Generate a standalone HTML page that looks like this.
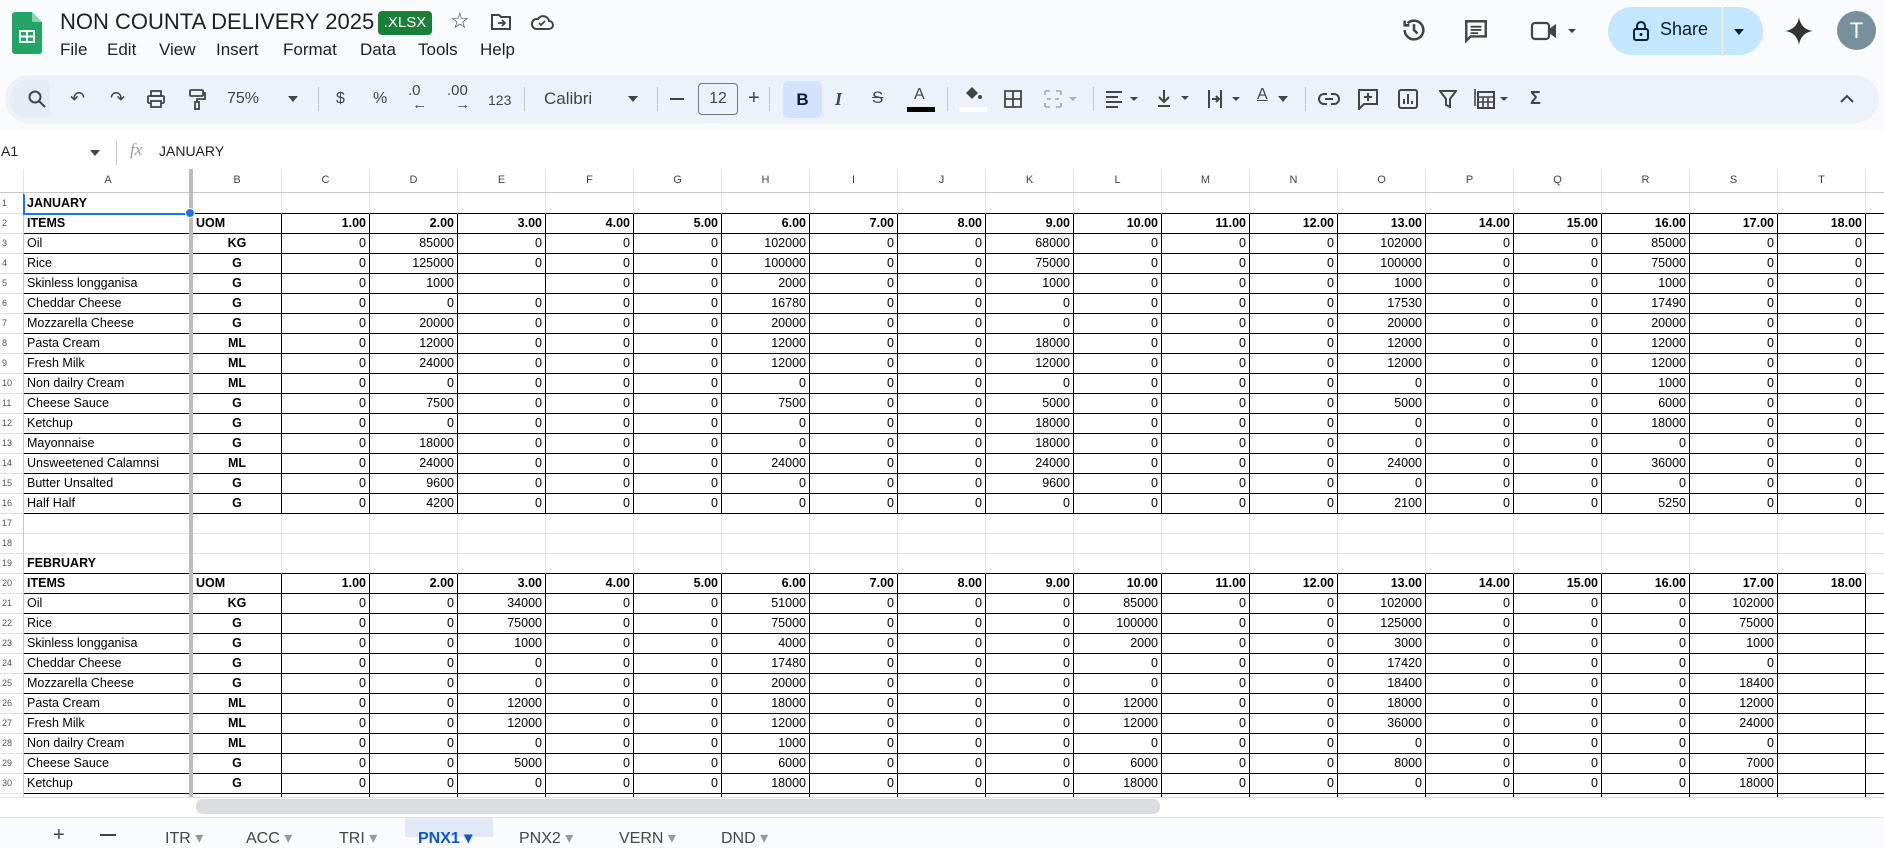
<!DOCTYPE html>
<html><head><meta charset="utf-8">
<style>
*{box-sizing:border-box;margin:0;padding:0}
body{width:1884px;height:837px;overflow:hidden;background:#f9fbfd;font-family:"Liberation Sans",Arial,sans-serif;position:relative;color:#1f1f1f}
.a{position:absolute}
.menu span{position:absolute;top:40px;font-size:17px;color:#1f1f1f}
.tb{position:absolute;top:75px;left:5px;width:1874px;height:48px;background:#edf2fa;border-radius:24px}
.div{position:absolute;top:87px;width:1px;height:24px;background:#c7c7c7}
#grid{position:absolute;left:0;top:169px;width:1884px;height:628px;overflow:hidden;background:#fff}
table{border-collapse:separate;border-spacing:0;table-layout:fixed;width:1900px}
td,th{box-sizing:border-box;height:20px;border-right:1px solid #e2e3e3;border-bottom:1px solid #e2e3e3;font-size:12.5px;white-space:nowrap;overflow:hidden;padding:0 3px;text-align:right;font-weight:normal;color:#000;line-height:19px}
tr.h th{height:24px;font-size:11px;color:#444;text-align:center;border-bottom:1px solid #c4c7c5;border-right:1px solid #e2e3e3}
tr.r1 td,tr.r1 th{height:21px}
th.r{font-size:9px;color:#555;text-align:left;padding-left:2px;border-right:1px solid #c4c7c5}
tr.d td{border-right:1px solid #000;border-bottom:1px solid #000}
tr.bb td.k{border-bottom:1px solid #000}
td.l{text-align:left}
td.c{text-align:center;font-weight:bold}
tr.hd td{font-weight:bold}
.tab{position:absolute;top:828px;font-size:16px;color:#444746}
</style></head><body>
<svg class="a" style="left:12px;top:12px" width="30" height="42" viewBox="0 0 30 42"><path d="M3 0h17l10 10v29a3 3 0 0 1-3 3H3a3 3 0 0 1-3-3V3a3 3 0 0 1 3-3z" fill="#23a566"/><path d="M20 0l10 10h-8a2 2 0 0 1-2-2z" fill="#8ed1b1"/><rect x="7" y="18" width="16" height="13" fill="#fff"/><rect x="9" y="20" width="5" height="3.5" fill="#23a566"/><rect x="16" y="20" width="5" height="3.5" fill="#23a566"/><rect x="9" y="25.5" width="5" height="3.5" fill="#23a566"/><rect x="16" y="25.5" width="5" height="3.5" fill="#23a566"/></svg>
<div class="a" style="left:60px;top:9px;font-size:22px;color:#1f1f1f">NON COUNTA DELIVERY 2025</div>
<div class="a" style="left:378px;top:11px;width:54px;height:24px;background:#188038;border-radius:4px;color:#fff;font-size:15px;line-height:24px;text-align:center">.XLSX</div>
<div class="a" style="left:450px;top:8px;font-size:22px;color:#444">☆</div>
<svg class="a" style="left:490px;top:12px" width="22" height="20" viewBox="0 0 22 20"><path d="M2 3h7l2 2h9v12H2z" fill="none" stroke="#444" stroke-width="2"/><path d="M8 11h7M12 8l3 3-3 3" fill="none" stroke="#444" stroke-width="1.8"/></svg>
<svg class="a" style="left:530px;top:12px" width="24" height="20" viewBox="0 0 24 20"><path d="M6 17h13a4 4 0 0 0 0-8 6 6 0 0 0-11-2 5 5 0 0 0-2 10z" fill="none" stroke="#444" stroke-width="2"/><path d="M9 11l2 2 4-4" fill="none" stroke="#444" stroke-width="1.8"/></svg>
<div class="menu"><span style="left:60px">File</span><span style="left:107px">Edit</span><span style="left:159px">View</span><span style="left:216px">Insert</span><span style="left:283px">Format</span><span style="left:360px">Data</span><span style="left:418px">Tools</span><span style="left:480px">Help</span></div>
<svg class="a" style="left:1400px;top:16px" width="28" height="28" viewBox="0 0 24 24"><path d="M4 12a8 8 0 1 0 2.5-5.8M4 4v4h4" fill="none" stroke="#444" stroke-width="2.2"/><path d="M12 7v5l3 3" fill="none" stroke="#444" stroke-width="2.2"/></svg>
<svg class="a" style="left:1463px;top:18px" width="26" height="26" viewBox="0 0 24 24"><path d="M3 3h18v14H7l-4 4z" fill="none" stroke="#444" stroke-width="2.2"/><path d="M7 8h10M7 11h10M7 14h7" stroke="#444" stroke-width="1.8"/></svg>
<svg class="a" style="left:1530px;top:19px" width="50" height="24" viewBox="0 0 50 24"><rect x="2" y="4" width="17" height="16" rx="3" fill="none" stroke="#444" stroke-width="2.2"/><path d="M19 10l7-5v14l-7-5z" fill="#444"/><path d="M38 10h8l-4 4z" fill="#444"/></svg>
<div class="a" style="left:1608px;top:7px;width:155px;height:48px;background:#c2e7ff;border-radius:24px"></div>
<div class="a" style="left:1722px;top:7px;width:1px;height:48px;background:#fff"></div>
<svg class="a" style="left:1632px;top:20px" width="18" height="22" viewBox="0 0 18 22"><rect x="2" y="9" width="14" height="11" rx="2" fill="none" stroke="#0b1d33" stroke-width="2"/><path d="M5 9V6a4 4 0 0 1 8 0v3" fill="none" stroke="#0b1d33" stroke-width="2"/><circle cx="9" cy="14.5" r="1.5" fill="#0b1d33"/></svg>
<div class="a" style="left:1660px;top:19px;font-size:18px;color:#0b1d33">Share</div>
<svg class="a" style="left:1733px;top:28px" width="12" height="8" viewBox="0 0 12 8"><path d="M1 1h10L6 7z" fill="#0b1d33"/></svg>
<svg class="a" style="left:1785px;top:17px" width="28" height="28" viewBox="0 0 28 28"><path d="M14 0C15 8 20 13 28 14 20 15 15 20 14 28 13 20 8 15 0 14 8 13 13 8 14 0z" fill="#333"/></svg>
<div class="a" style="left:1837px;top:11px;width:39px;height:39px;border-radius:50%;background:#78909c;color:#fff;font-size:22px;line-height:39px;text-align:center">T</div>
<div class="tb"></div>
<div class="a" style="left:10px;top:80px;width:40px;height:38px;background:#e6ecf6;border-radius:18px 4px 4px 18px"></div>
<svg class="a" style="left:28px;top:90px" width="18" height="18" viewBox="0 0 18 18"><circle cx="7" cy="7" r="5.5" fill="none" stroke="#444" stroke-width="2"/><path d="M11 11l6 6" stroke="#444" stroke-width="2"/></svg>
<div class="a" style="left:70px;top:88px;font-size:18px;color:#444">↶</div>
<div class="a" style="left:110px;top:88px;font-size:18px;color:#444">↷</div>
<svg class="a" style="left:146px;top:89px" width="20" height="20" viewBox="0 0 20 20"><rect x="5" y="2" width="10" height="5" fill="none" stroke="#444" stroke-width="1.8"/><rect x="2" y="7" width="16" height="7" rx="1" fill="none" stroke="#444" stroke-width="1.8"/><rect x="5" y="12" width="10" height="6" fill="#edf2fa" stroke="#444" stroke-width="1.8"/></svg>
<svg class="a" style="left:188px;top:88px" width="18" height="22" viewBox="0 0 18 22"><rect x="2" y="2" width="13" height="6" rx="1" fill="none" stroke="#444" stroke-width="1.8"/><path d="M15 5h2v6H9v3" fill="none" stroke="#444" stroke-width="1.8"/><rect x="7" y="14" width="4" height="7" fill="none" stroke="#444" stroke-width="1.8"/></svg>
<div class="a" style="left:227px;top:90px;font-size:16px;color:#444">75%</div>
<svg class="a" style="left:288px;top:96px" width="10" height="6"><path d="M0 0h10L5 6z" fill="#444"/></svg>
<div class="div" style="left:318px"></div>
<div class="a" style="left:336px;top:90px;font-size:16px;color:#444">$</div>
<div class="a" style="left:373px;top:90px;font-size:16px;color:#444">%</div>
<div class="a" style="left:408px;top:84px;font-size:15px;color:#444;line-height:14px">.0<br>&nbsp;←</div>
<div class="a" style="left:447px;top:84px;font-size:15px;color:#444;line-height:14px">.00<br>&nbsp;&nbsp;→</div>
<div class="a" style="left:488px;top:92px;font-size:14px;color:#444">123</div>
<div class="div" style="left:524px"></div>
<div class="a" style="left:544px;top:89px;font-size:17px;color:#444">Calibri</div>
<svg class="a" style="left:628px;top:96px" width="10" height="6"><path d="M0 0h10L5 6z" fill="#444"/></svg>
<div class="div" style="left:657px"></div>
<div class="a" style="left:670px;top:98px;width:14px;height:2px;background:#444"></div>
<div class="a" style="left:698px;top:83px;width:40px;height:32px;border:1px solid #747775;border-radius:4px;font-size:16px;line-height:30px;text-align:center;color:#444">12</div>
<div class="a" style="left:748px;top:87px;font-size:20px;color:#444">+</div>
<div class="div" style="left:769px"></div>
<div class="a" style="left:783px;top:81px;width:39px;height:37px;background:#d3e3fd;border-radius:5px;font-weight:bold;color:#0b1d33;font-size:17px;text-align:center;line-height:37px">B</div>
<div class="a" style="left:835px;top:89px;font-size:18px;color:#444;font-style:italic;font-family:'Liberation Serif',serif;font-weight:bold">I</div>
<div class="a" style="left:872px;top:88px;font-size:17px;color:#444;text-decoration:line-through">S</div>
<div class="a" style="left:914px;top:86px;font-size:16px;color:#444">A</div>
<div class="a" style="left:907px;top:107px;width:28px;height:5px;background:#000"></div>
<div class="div" style="left:947px"></div>
<svg class="a" style="left:962px;top:85px" width="22" height="18" viewBox="0 0 22 18"><path d="M4 8l6-6 6 6-6 6z" fill="#444"/><circle cx="18" cy="12" r="2" fill="#444"/></svg>
<div class="a" style="left:959px;top:107px;width:28px;height:5px;background:#fff"></div>
<svg class="a" style="left:1004px;top:90px" width="18" height="18" viewBox="0 0 18 18"><path d="M1 1h16v16H1zM9 1v16M1 9h16" fill="none" stroke="#444" stroke-width="1.8"/></svg>
<svg class="a" style="left:1044px;top:90px" width="36" height="18" viewBox="0 0 36 18"><path d="M1 1h5M1 17h5M12 1h5M12 17h5M1 1v4M1 13v4M17 1v4M17 13v4M3 9h4M11 9h4" stroke="#b0b0b0" stroke-width="1.8" fill="none"/><path d="M25 7h8l-4 4z" fill="#b0b0b0"/></svg>
<div class="div" style="left:1093px"></div>
<svg class="a" style="left:1105px;top:90px" width="36" height="18" viewBox="0 0 36 18"><path d="M1 2h16M1 7h12M1 12h16M1 17h12" stroke="#444" stroke-width="2"/><path d="M25 7h8l-4 4z" fill="#444"/></svg>
<svg class="a" style="left:1156px;top:88px" width="36" height="20" viewBox="0 0 36 20"><path d="M8 2v12M3 9l5 5 5-5M2 18h12" stroke="#444" stroke-width="2" fill="none"/><path d="M25 8h8l-4 4z" fill="#444"/></svg>
<svg class="a" style="left:1207px;top:89px" width="36" height="20" viewBox="0 0 36 20"><path d="M2 1v18M14 1v18M5 10h7M9 7l3 3-3 3" stroke="#444" stroke-width="2" fill="none"/><path d="M25 8h8l-4 4z" fill="#444"/></svg>
<div class="a" style="left:1257px;top:86px;font-size:16px;color:#444;text-decoration:underline">A</div>
<svg class="a" style="left:1278px;top:96px" width="10" height="6"><path d="M0 0h10L5 6z" fill="#444"/></svg>
<div class="div" style="left:1305px"></div>
<svg class="a" style="left:1318px;top:92px" width="22" height="14" viewBox="0 0 22 14"><path d="M9 2H6a5 5 0 0 0 0 10h3M13 2h3a5 5 0 0 1 0 10h-3M7 7h8" fill="none" stroke="#444" stroke-width="2"/></svg>
<svg class="a" style="left:1357px;top:88px" width="22" height="22" viewBox="0 0 22 22"><path d="M2 2h18v14H7l-5 5z" fill="none" stroke="#444" stroke-width="2"/><path d="M11 5v8M7 9h8" stroke="#444" stroke-width="2"/></svg>
<svg class="a" style="left:1398px;top:89px" width="20" height="20" viewBox="0 0 20 20"><rect x="1" y="1" width="18" height="18" rx="2" fill="none" stroke="#444" stroke-width="2"/><path d="M6 15V10M10 15V5M14 15v-3" stroke="#444" stroke-width="2"/></svg>
<svg class="a" style="left:1439px;top:90px" width="18" height="18" viewBox="0 0 18 18"><path d="M1 1h16l-6 8v8l-4-2V9z" fill="none" stroke="#444" stroke-width="2"/></svg>
<svg class="a" style="left:1474px;top:88px" width="38" height="22" viewBox="0 0 38 22"><rect x="4" y="4" width="16" height="16" fill="none" stroke="#444" stroke-width="2"/><path d="M1 1v17M4 9h16M4 14h16M9 9v11M14 9v11" stroke="#444" stroke-width="1.6"/><path d="M26 9h8l-4 4z" fill="#444"/></svg>
<div class="a" style="left:1530px;top:88px;font-size:18px;color:#444;font-weight:bold">Σ</div>
<svg class="a" style="left:1840px;top:94px" width="14" height="9" viewBox="0 0 14 9"><path d="M1 8l6-6 6 6" fill="none" stroke="#444" stroke-width="2"/></svg>
<div class="a" style="left:0;top:130px;width:1884px;height:39px;background:#fff"></div>
<div class="a" style="left:1px;top:143px;font-size:14px;color:#1f1f1f">A1</div>
<svg class="a" style="left:90px;top:150px" width="10" height="6"><path d="M0 0h10L5 6z" fill="#444"/></svg>
<div class="a" style="left:116px;top:141px;width:1px;height:24px;background:#c7c7c7"></div>
<div class="a" style="left:130px;top:140px;font-size:17px;color:#999;font-style:italic;font-family:'Liberation Serif',serif">fx</div>
<div class="a" style="left:159px;top:143px;font-size:14px;color:#1f1f1f">JANUARY</div>
<div id="grid">
<table>
<colgroup><col style="width:24px"><col style="width:169px"><col style="width:89px"><col span="18" style="width:88px"><col style="width:100px"></colgroup>
<tr class="h"><th></th><th>A</th><th>B</th><th>C</th><th>D</th><th>E</th><th>F</th><th>G</th><th>H</th><th>I</th><th>J</th><th>K</th><th>L</th><th>M</th><th>N</th><th>O</th><th>P</th><th>Q</th><th>R</th><th>S</th><th>T</th><th></th></tr>
<tr class="bb r1"><th class="r">1</th><td class="l" style="font-weight:bold">JANUARY</td><td class="k"></td><td class="k"></td><td class="k"></td><td class="k"></td><td class="k"></td><td class="k"></td><td class="k"></td><td class="k"></td><td class="k"></td><td class="k"></td><td class="k"></td><td class="k"></td><td class="k"></td><td class="k"></td><td class="k"></td><td class="k"></td><td class="k"></td><td class="k"></td><td class="k"></td><td class="k"></td></tr>
<tr class="d hd"><th class="r">2</th><td class="l">ITEMS</td><td class="l">UOM</td><td>1.00</td><td>2.00</td><td>3.00</td><td>4.00</td><td>5.00</td><td>6.00</td><td>7.00</td><td>8.00</td><td>9.00</td><td>10.00</td><td>11.00</td><td>12.00</td><td>13.00</td><td>14.00</td><td>15.00</td><td>16.00</td><td>17.00</td><td>18.00</td><td></td></tr>
<tr class="d"><th class="r">3</th><td class="l">Oil</td><td class="c">KG</td><td>0</td><td>85000</td><td>0</td><td>0</td><td>0</td><td>102000</td><td>0</td><td>0</td><td>68000</td><td>0</td><td>0</td><td>0</td><td>102000</td><td>0</td><td>0</td><td>85000</td><td>0</td><td>0</td><td></td></tr>
<tr class="d"><th class="r">4</th><td class="l">Rice</td><td class="c">G</td><td>0</td><td>125000</td><td>0</td><td>0</td><td>0</td><td>100000</td><td>0</td><td>0</td><td>75000</td><td>0</td><td>0</td><td>0</td><td>100000</td><td>0</td><td>0</td><td>75000</td><td>0</td><td>0</td><td></td></tr>
<tr class="d"><th class="r">5</th><td class="l">Skinless longganisa</td><td class="c">G</td><td>0</td><td>1000</td><td></td><td>0</td><td>0</td><td>2000</td><td>0</td><td>0</td><td>1000</td><td>0</td><td>0</td><td>0</td><td>1000</td><td>0</td><td>0</td><td>1000</td><td>0</td><td>0</td><td></td></tr>
<tr class="d"><th class="r">6</th><td class="l">Cheddar Cheese</td><td class="c">G</td><td>0</td><td>0</td><td>0</td><td>0</td><td>0</td><td>16780</td><td>0</td><td>0</td><td>0</td><td>0</td><td>0</td><td>0</td><td>17530</td><td>0</td><td>0</td><td>17490</td><td>0</td><td>0</td><td></td></tr>
<tr class="d"><th class="r">7</th><td class="l">Mozzarella Cheese</td><td class="c">G</td><td>0</td><td>20000</td><td>0</td><td>0</td><td>0</td><td>20000</td><td>0</td><td>0</td><td>0</td><td>0</td><td>0</td><td>0</td><td>20000</td><td>0</td><td>0</td><td>20000</td><td>0</td><td>0</td><td></td></tr>
<tr class="d"><th class="r">8</th><td class="l">Pasta Cream</td><td class="c">ML</td><td>0</td><td>12000</td><td>0</td><td>0</td><td>0</td><td>12000</td><td>0</td><td>0</td><td>18000</td><td>0</td><td>0</td><td>0</td><td>12000</td><td>0</td><td>0</td><td>12000</td><td>0</td><td>0</td><td></td></tr>
<tr class="d"><th class="r">9</th><td class="l">Fresh Milk</td><td class="c">ML</td><td>0</td><td>24000</td><td>0</td><td>0</td><td>0</td><td>12000</td><td>0</td><td>0</td><td>12000</td><td>0</td><td>0</td><td>0</td><td>12000</td><td>0</td><td>0</td><td>12000</td><td>0</td><td>0</td><td></td></tr>
<tr class="d"><th class="r">10</th><td class="l">Non dailry Cream</td><td class="c">ML</td><td>0</td><td>0</td><td>0</td><td>0</td><td>0</td><td>0</td><td>0</td><td>0</td><td>0</td><td>0</td><td>0</td><td>0</td><td>0</td><td>0</td><td>0</td><td>1000</td><td>0</td><td>0</td><td></td></tr>
<tr class="d"><th class="r">11</th><td class="l">Cheese Sauce</td><td class="c">G</td><td>0</td><td>7500</td><td>0</td><td>0</td><td>0</td><td>7500</td><td>0</td><td>0</td><td>5000</td><td>0</td><td>0</td><td>0</td><td>5000</td><td>0</td><td>0</td><td>6000</td><td>0</td><td>0</td><td></td></tr>
<tr class="d"><th class="r">12</th><td class="l">Ketchup</td><td class="c">G</td><td>0</td><td>0</td><td>0</td><td>0</td><td>0</td><td>0</td><td>0</td><td>0</td><td>18000</td><td>0</td><td>0</td><td>0</td><td>0</td><td>0</td><td>0</td><td>18000</td><td>0</td><td>0</td><td></td></tr>
<tr class="d"><th class="r">13</th><td class="l">Mayonnaise</td><td class="c">G</td><td>0</td><td>18000</td><td>0</td><td>0</td><td>0</td><td>0</td><td>0</td><td>0</td><td>18000</td><td>0</td><td>0</td><td>0</td><td>0</td><td>0</td><td>0</td><td>0</td><td>0</td><td>0</td><td></td></tr>
<tr class="d"><th class="r">14</th><td class="l">Unsweetened Calamnsi</td><td class="c">ML</td><td>0</td><td>24000</td><td>0</td><td>0</td><td>0</td><td>24000</td><td>0</td><td>0</td><td>24000</td><td>0</td><td>0</td><td>0</td><td>24000</td><td>0</td><td>0</td><td>36000</td><td>0</td><td>0</td><td></td></tr>
<tr class="d"><th class="r">15</th><td class="l">Butter Unsalted</td><td class="c">G</td><td>0</td><td>9600</td><td>0</td><td>0</td><td>0</td><td>0</td><td>0</td><td>0</td><td>9600</td><td>0</td><td>0</td><td>0</td><td>0</td><td>0</td><td>0</td><td>0</td><td>0</td><td>0</td><td></td></tr>
<tr class="d"><th class="r">16</th><td class="l">Half Half</td><td class="c">G</td><td>0</td><td>4200</td><td>0</td><td>0</td><td>0</td><td>0</td><td>0</td><td>0</td><td>0</td><td>0</td><td>0</td><td>0</td><td>2100</td><td>0</td><td>0</td><td>5250</td><td>0</td><td>0</td><td></td></tr>
<tr><th class="r">17</th><td></td><td></td><td></td><td></td><td></td><td></td><td></td><td></td><td></td><td></td><td></td><td></td><td></td><td></td><td></td><td></td><td></td><td></td><td></td><td></td><td></td></tr>
<tr><th class="r">18</th><td></td><td></td><td></td><td></td><td></td><td></td><td></td><td></td><td></td><td></td><td></td><td></td><td></td><td></td><td></td><td></td><td></td><td></td><td></td><td></td><td></td></tr>
<tr class="bb"><th class="r">19</th><td class="l k" style="font-weight:bold">FEBRUARY</td><td class="k"></td><td class="k"></td><td class="k"></td><td class="k"></td><td class="k"></td><td class="k"></td><td class="k"></td><td class="k"></td><td class="k"></td><td class="k"></td><td class="k"></td><td class="k"></td><td class="k"></td><td class="k"></td><td class="k"></td><td class="k"></td><td class="k"></td><td class="k"></td><td class="k"></td><td></td></tr>
<tr class="d hd"><th class="r">20</th><td class="l">ITEMS</td><td class="l">UOM</td><td>1.00</td><td>2.00</td><td>3.00</td><td>4.00</td><td>5.00</td><td>6.00</td><td>7.00</td><td>8.00</td><td>9.00</td><td>10.00</td><td>11.00</td><td>12.00</td><td>13.00</td><td>14.00</td><td>15.00</td><td>16.00</td><td>17.00</td><td>18.00</td><td></td></tr>
<tr class="d"><th class="r">21</th><td class="l">Oil</td><td class="c">KG</td><td>0</td><td>0</td><td>34000</td><td>0</td><td>0</td><td>51000</td><td>0</td><td>0</td><td>0</td><td>85000</td><td>0</td><td>0</td><td>102000</td><td>0</td><td>0</td><td>0</td><td>102000</td><td></td><td></td></tr>
<tr class="d"><th class="r">22</th><td class="l">Rice</td><td class="c">G</td><td>0</td><td>0</td><td>75000</td><td>0</td><td>0</td><td>75000</td><td>0</td><td>0</td><td>0</td><td>100000</td><td>0</td><td>0</td><td>125000</td><td>0</td><td>0</td><td>0</td><td>75000</td><td></td><td></td></tr>
<tr class="d"><th class="r">23</th><td class="l">Skinless longganisa</td><td class="c">G</td><td>0</td><td>0</td><td>1000</td><td>0</td><td>0</td><td>4000</td><td>0</td><td>0</td><td>0</td><td>2000</td><td>0</td><td>0</td><td>3000</td><td>0</td><td>0</td><td>0</td><td>1000</td><td></td><td></td></tr>
<tr class="d"><th class="r">24</th><td class="l">Cheddar Cheese</td><td class="c">G</td><td>0</td><td>0</td><td>0</td><td>0</td><td>0</td><td>17480</td><td>0</td><td>0</td><td>0</td><td>0</td><td>0</td><td>0</td><td>17420</td><td>0</td><td>0</td><td>0</td><td>0</td><td></td><td></td></tr>
<tr class="d"><th class="r">25</th><td class="l">Mozzarella Cheese</td><td class="c">G</td><td>0</td><td>0</td><td>0</td><td>0</td><td>0</td><td>20000</td><td>0</td><td>0</td><td>0</td><td>0</td><td>0</td><td>0</td><td>18400</td><td>0</td><td>0</td><td>0</td><td>18400</td><td></td><td></td></tr>
<tr class="d"><th class="r">26</th><td class="l">Pasta Cream</td><td class="c">ML</td><td>0</td><td>0</td><td>12000</td><td>0</td><td>0</td><td>18000</td><td>0</td><td>0</td><td>0</td><td>12000</td><td>0</td><td>0</td><td>18000</td><td>0</td><td>0</td><td>0</td><td>12000</td><td></td><td></td></tr>
<tr class="d"><th class="r">27</th><td class="l">Fresh Milk</td><td class="c">ML</td><td>0</td><td>0</td><td>12000</td><td>0</td><td>0</td><td>12000</td><td>0</td><td>0</td><td>0</td><td>12000</td><td>0</td><td>0</td><td>36000</td><td>0</td><td>0</td><td>0</td><td>24000</td><td></td><td></td></tr>
<tr class="d"><th class="r">28</th><td class="l">Non dailry Cream</td><td class="c">ML</td><td>0</td><td>0</td><td>0</td><td>0</td><td>0</td><td>1000</td><td>0</td><td>0</td><td>0</td><td>0</td><td>0</td><td>0</td><td>0</td><td>0</td><td>0</td><td>0</td><td>0</td><td></td><td></td></tr>
<tr class="d"><th class="r">29</th><td class="l">Cheese Sauce</td><td class="c">G</td><td>0</td><td>0</td><td>5000</td><td>0</td><td>0</td><td>6000</td><td>0</td><td>0</td><td>0</td><td>6000</td><td>0</td><td>0</td><td>8000</td><td>0</td><td>0</td><td>0</td><td>7000</td><td></td><td></td></tr>
<tr class="d"><th class="r">30</th><td class="l">Ketchup</td><td class="c">G</td><td>0</td><td>0</td><td>0</td><td>0</td><td>0</td><td>18000</td><td>0</td><td>0</td><td>0</td><td>18000</td><td>0</td><td>0</td><td>0</td><td>0</td><td>0</td><td>0</td><td>18000</td><td></td><td></td></tr>
<tr class="d"><th class="r">31</th><td class="l">Mayonnaise</td><td class="c">G</td><td>0</td><td>0</td><td>0</td><td>0</td><td>0</td><td>0</td><td>0</td><td>0</td><td>0</td><td>0</td><td>0</td><td>0</td><td>0</td><td>0</td><td>0</td><td>0</td><td>0</td><td></td><td></td></tr>
</table>
</div>
<div class="a" style="left:189px;top:169px;width:4px;height:648px;background:#bdbdbd"></div>
<div class="a" style="left:23px;top:193px;width:167px;height:22px;border:2px solid #1a73e8;border-top-color:transparent;border-right:none"></div>
<div class="a" style="left:185px;top:208px;width:10px;height:10px;border-radius:50%;background:#1a73e8;border:1px solid #fff"></div>
<div class="a" style="left:0;top:797px;width:1884px;height:20px;background:#fff;border-top:1px solid #e1e1e1"></div>
<div class="a" style="left:196px;top:799px;width:964px;height:15px;background:#dadce0;border-radius:7px"></div>
<div class="a" style="left:0;top:817px;width:1884px;height:20px;background:#f9fbfd;border-top:1px solid #e1e1e1"></div>
<div class="a" style="left:405px;top:818px;width:88px;height:19px;background:#e1e9f7"></div>
<div class="tab" style="left:53px;font-size:20px;top:824px">+</div>
<div class="a" style="left:100px;top:834px;width:16px;height:2px;background:#444"></div>
<div class="tab" style="left:165px">ITR <span style="color:#999">▾</span></div>
<div class="tab" style="left:246px">ACC <span style="color:#999">▾</span></div>
<div class="tab" style="left:339px">TRI <span style="color:#999">▾</span></div>
<div class="tab" style="left:418px;color:#0b57d0;font-weight:bold">PNX1 <span style="color:#0b57d0">▾</span></div>
<div class="tab" style="left:519px">PNX2 <span style="color:#999">▾</span></div>
<div class="tab" style="left:619px">VERN <span style="color:#999">▾</span></div>
<div class="tab" style="left:721px">DND <span style="color:#999">▾</span></div>
</body></html>
